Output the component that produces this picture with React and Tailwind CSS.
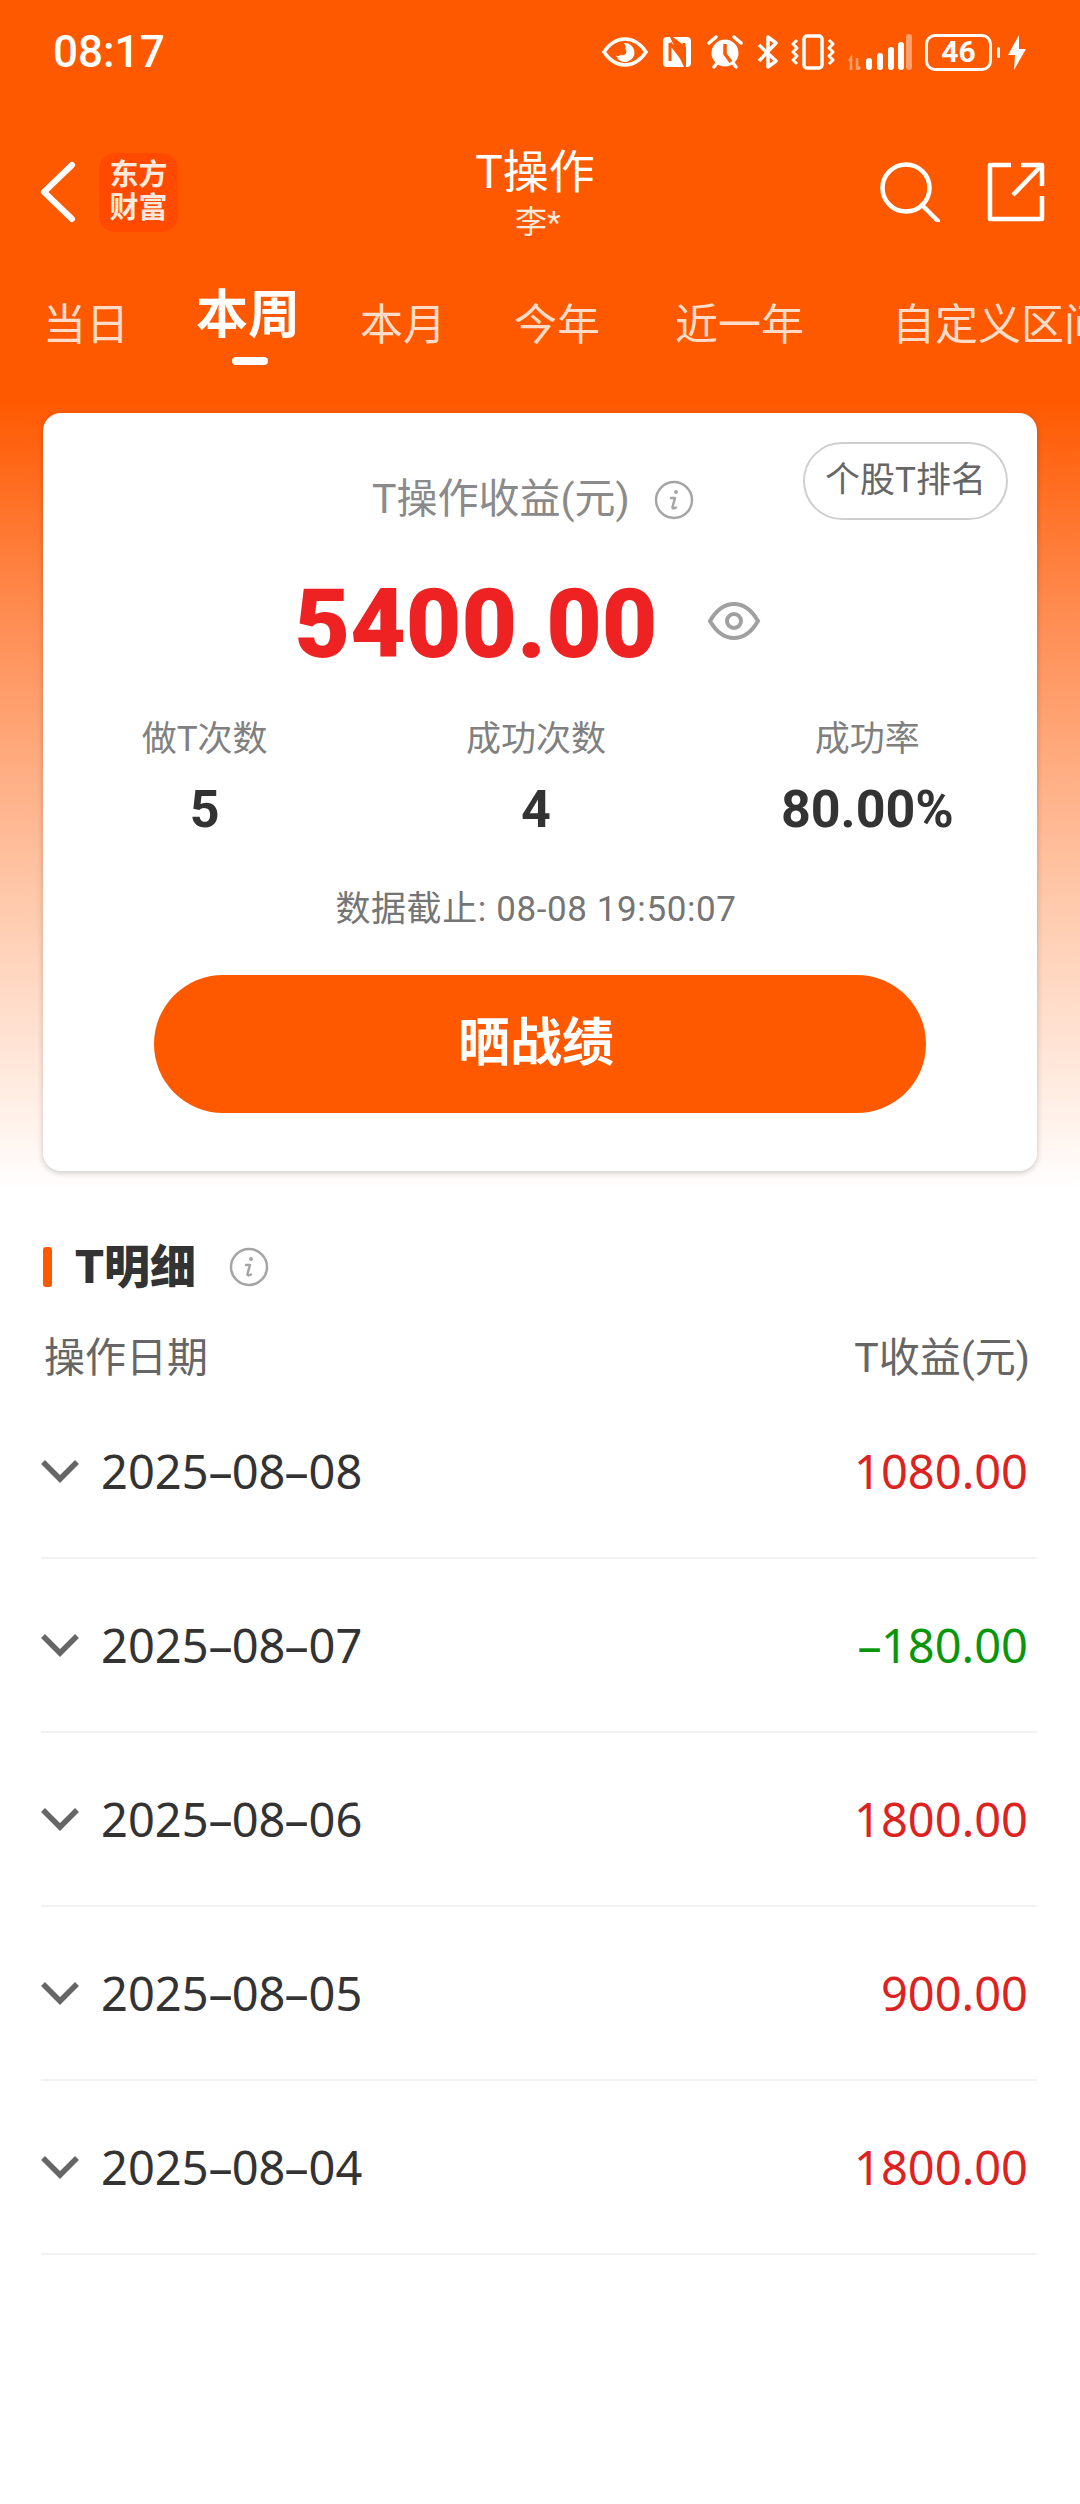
import React from 'react';

const CN = "font-['Roboto','Noto_Sans_CJK_SC',sans-serif]";

const tabs = [
  { label: '当日', cls: 'ml-[43px] text-[43px] text-[#ffdcc8]' },
  { label: '本周', cls: 'ml-[67px] pb-[9px] text-[52px] font-bold text-white', active: true },
  { label: '本月', cls: 'ml-[60px] text-[43px] text-[#ffdcc8]' },
  { label: '今年', cls: 'ml-[68px] text-[43px] text-[#ffdcc8]' },
  { label: '近一年', cls: 'ml-[75px] text-[43px] text-[#ffdcc8]' },
  { label: '自定义区间', cls: 'ml-[88px] text-[43px] text-[#ffdcc8]' },
];

const rows = [
  { date: '2025-08-08', value: '1080.00', up: true },
  { date: '2025-08-07', value: '-180.00', up: false },
  { date: '2025-08-06', value: '1800.00', up: true },
  { date: '2025-08-05', value: '900.00', up: true },
  { date: '2025-08-04', value: '1800.00', up: true },
];

const stats = [
  { label: '做T次数', value: '5' },
  { label: '成功次数', value: '4' },
  { label: '成功率', value: '80.00%' },
];

// the hyphen in the reference font is much wider than in Noto Sans
function WideDash({ text }) {
  return text.split('-').map((part, i) => (
    <React.Fragment key={i}>
      {i > 0 && <span className="inline-block mx-[4px] scale-x-[1.8]">-</span>}
      {part}
    </React.Fragment>
  ));
}

function StatusIcons() {
  return (
    <div className="flex items-center text-white">
      {/* eye */}
      <svg width="46" height="30" viewBox="0 0 46 30" fill="none">
        <path d="M2 15C8 6 15 2 23 2s15 4 21 13c-6 9-13 13-21 13S8 24 2 15Z" stroke="currentColor" strokeWidth="3.5" />
        <path fillRule="evenodd" d="M23 6a9.5 9.5 0 1 1-9 12.5c2 1 4 .5 5-1 1 1 3 1 4.500-.5 1.500-2 1-4-.5-5.500 1-1 .5-3-1-5.500Z" fill="currentColor" />
      </svg>
      {/* nfc */}
      <svg className="ml-[13px]" width="32" height="34" viewBox="0 0 32 34" fill="none">
        <path d="M6 2h3l14 30H6a4 4 0 0 1-4-4V6a4 4 0 0 1 4-4Z" fill="currentColor" />
        <path d="M12 2h14a4 4 0 0 1 4 4v22a4 4 0 0 1-4 4h-1V12L12 2Z" fill="currentColor" />
        <path d="M9 8v18M23 8v18M9 8l14 18" stroke="#ff5900" strokeWidth="3" />
      </svg>
      {/* alarm */}
      <svg className="ml-[13px]" width="38" height="36" viewBox="0 0 38 36" fill="none">
        <circle cx="19" cy="19" r="13.500" fill="currentColor" />
        <path d="M19 10v10l6 8" stroke="#ff5900" strokeWidth="3.500" />
        <path d="M3 9l7-6M35 9l-7-6M8 33l3-4M30 33l-3-4" stroke="currentColor" strokeWidth="3.500" strokeLinecap="round" />
      </svg>
      {/* bluetooth */}
      <svg className="ml-[13px]" width="21" height="34" viewBox="0 0 21 34" fill="none" stroke="currentColor" strokeWidth="3.500" strokeLinejoin="round">
        <path d="M2 10l17 16-8 6V2l8 6L2 26" />
      </svg>
      {/* vibrate */}
      <svg className="ml-[13px]" width="44" height="36" viewBox="0 0 44 36" fill="none" stroke="currentColor" strokeWidth="3" strokeLinejoin="round">
        <rect x="13" y="2" width="18" height="32" rx="3" strokeWidth="3.500" />
        <path d="M6 6L2 10l4 4-4 4 4 4-4 4 4 4M38 6l4 4-4 4 4 4-4 4 4 4-4 4" />
      </svg>
      {/* signal */}
      <svg className="ml-[13px]" width="64" height="36" viewBox="0 0 64 36">
        <path d="M3 36V24l-2 3M9 24v12l3-3" fill="none" stroke="#ffa070" strokeWidth="2.500" />
        <rect x="18" y="24" width="6" height="12" rx="3" fill="#fff" />
        <rect x="29" y="19" width="6" height="17" rx="3" fill="#fff" />
        <rect x="40" y="13" width="6" height="23" rx="3" fill="#fff" />
        <rect x="50" y="8" width="6" height="28" rx="3" fill="#fff" />
        <rect x="58" y="0" width="6" height="36" rx="3" fill="#ffa070" />
      </svg>
      {/* battery */}
      <div className="ml-[13px] w-[67px] h-[37px] rounded-[10px] border-[3px] border-white flex items-center justify-center">
        <span className="font-['Roboto',sans-serif] font-bold text-[30px] leading-none">46</span>
      </div>
      <div className="ml-[5px] w-[3px] h-[11px] rounded-full bg-white" />
      <svg className="ml-[8px]" width="18" height="35" viewBox="0 0 18 35">
        <path d="M11 0L0 20h7L6 35l12-21h-7L11 0Z" fill="currentColor" />
      </svg>
    </div>
  );
}

function InfoIcon({ size = 40, color = '#a5a5a5' }) {
  return (
    <svg width={size} height={size} viewBox="0 0 40 40" fill="none">
      <circle cx="20" cy="20" r="18" stroke={color} strokeWidth="2.500" />
      <circle cx="22" cy="12" r="2" fill={color} />
      <path d="M17 18h4l-2.500 9c-.3 1.500 1 2 3.500.5" stroke={color} strokeWidth="2.500" strokeLinecap="round" strokeLinejoin="round" />
    </svg>
  );
}

export default function App() {
  return (
    <div className={`${CN} w-[1080px] h-[2504px] overflow-hidden bg-[linear-gradient(180deg,#ff5900_0px,#ff5900_400px,#ff8b50_610px,#ffc9ab_900px,#ffffff_1190px)]`}>
      {/* Status bar */}
      <div className="h-[104px] flex items-center justify-between pl-[53px] pr-[54px]">
        <span className="font-['Roboto',sans-serif] font-medium text-[44px] leading-none text-white">08:17</span>
        <StatusIcons />
      </div>

      {/* Nav */}
      <div className="relative h-[176px] flex items-center justify-between text-white">
        <div className="flex items-center pl-[40px]">
          <svg width="36" height="62" viewBox="0 0 36 62" fill="none">
            <path d="M32 4L4 31l28 27" stroke="#fff" strokeWidth="6" strokeLinecap="round" strokeLinejoin="round" />
          </svg>
          <div className="ml-[23px] w-[79px] h-[79px] rounded-[16px] bg-[#ff4a00] flex flex-col items-center justify-center text-[#ffe9dd]">
            <span className="text-[29px] leading-[33px] font-bold">东方</span>
            <span className="text-[29px] leading-[33px] font-bold">财富</span>
          </div>
        </div>
        <div className="absolute inset-x-0 top-0 pr-[10px] flex flex-col items-center">
          <span className="mt-[40px] text-[46px] leading-[56px]">T操作</span>
          <span className="ml-[6px] mt-[2px] text-[32px] leading-[40px] text-[#ffe9dd]">李*</span>
        </div>
        <div className="flex items-center gap-[47px] pr-[35px]">
          <svg width="60" height="60" viewBox="0 0 60 60" fill="none" stroke="#fff" strokeWidth="4.500" strokeLinecap="round">
            <circle cx="26" cy="26" r="23.500" />
            <path d="M42 43l16 16" />
          </svg>
          <svg width="58" height="60" viewBox="0 0 58 60" fill="none" stroke="#fff" strokeWidth="4.500" strokeLinejoin="round">
            <path d="M24 3H3v54h52V34" />
            <path d="M34 3h21v21M55 3L26 33" />
          </svg>
        </div>
      </div>

      {/* Tabs */}
      <div className="h-[133px] pt-[3px] flex items-start overflow-hidden whitespace-nowrap">
        {tabs.map((tab) => (
          <div key={tab.label} className={`${tab.cls} relative shrink-0 h-[72px] flex items-end`}>
            <span className="leading-[60px]">{tab.label}</span>
            {tab.active && <div className="absolute left-[36px] -bottom-[10px] w-[36px] h-[8px] rounded-full bg-white" />}
          </div>
        ))}
      </div>

      {/* Summary card */}
      <div className="relative mx-[43px] h-[758px] rounded-[18px] bg-white shadow-[0_2px_6px_rgba(0,0,0,0.2)] flex flex-col items-center">
        <div className="absolute top-[29px] right-[29px] w-[205px] h-[78px] rounded-full border-2 border-[#cfcfcf] flex items-center justify-center text-[35px] text-[#666]">
          个股T排名
        </div>
        <div className="mt-[64px] h-[46px] flex items-center gap-[24px] pr-[14px] text-[41px] text-[#8a8a8a]">
          <span>T操作收益(元)</span>
          <InfoIcon />
        </div>
        <div className="mt-[47px] h-[108px] flex items-center gap-[50px] pr-[24px]">
          <span className="font-black text-[96px] leading-none text-[#ee2222]">5400.00</span>
          <svg className="mb-[6px]" width="54" height="40" viewBox="0 0 54 40" fill="none" stroke="#a0a0a0" strokeWidth="4">
            <path d="M3 20C10 8 18 3 27 3s17 5 24 17c-7 12-15 17-24 17S10 32 3 20Z" />
            <circle cx="27" cy="20" r="7" />
          </svg>
        </div>
        <div className="mt-[40px] -ml-[8px] w-full grid grid-cols-3">
          {stats.map((s) => (
            <div key={s.label} className="flex flex-col items-center">
              <span className="h-[44px] leading-[44px] text-[35px] text-[#808080]">{s.label}</span>
              <span className="mt-[20px] h-[56px] leading-[56px] text-[52px] font-bold text-[#333]">{s.value}</span>
            </div>
          ))}
        </div>
        <div className="mt-[50px] pr-[8px] h-[44px] leading-[44px] text-[35px] tracking-[0.6px] text-[#757575]">数据截止: 08-08 19:50:07</div>
        <div className="mt-[43px] w-[772px] h-[138px] pr-[8px] rounded-full bg-[#ff5900] flex items-center justify-center text-[52px] font-bold text-white">
          晒战绩
        </div>
      </div>

      {/* Detail */}
      <div className="mx-[43px] mt-[76px] flex items-center h-[40px]">
        <div className="w-[9px] h-[40px] rounded-[3px] bg-[#ff5900]" />
        <span className="ml-[23px] text-[46px] font-black text-[#333]">T明细</span>
        <div className="ml-[33px]"><InfoIcon /></div>
      </div>
      <div className="mx-[43px] mt-[49px] h-[46px] flex items-center justify-between pr-[7px] text-[41px] text-[#666]">
        <span className="ml-[1px]">操作日期</span>
        <span>T收益(元)</span>
      </div>
      <div className="ml-[41px] mr-[43px] mt-[3px] font-['Noto_Sans',sans-serif]">
        {rows.map((row) => (
          <div key={row.date} className="h-[174px] border-b-2 border-[#f2f2f2] flex items-center justify-between pr-[9px]">
            <div className="flex items-center">
              <svg width="38" height="24" viewBox="0 0 38 24" fill="none" stroke="#666" strokeWidth="5.500">
                <path d="M2 3l17 17L36 3" />
              </svg>
              <span className="ml-[22px] text-[47px] text-[#333]"><WideDash text={row.date} /></span>
            </div>
            <span className={`text-[47px] ${row.up ? 'text-[#dd2222]' : 'text-[#0a960a]'}`}><WideDash text={row.value} /></span>
          </div>
        ))}
      </div>
    </div>
  );
}
